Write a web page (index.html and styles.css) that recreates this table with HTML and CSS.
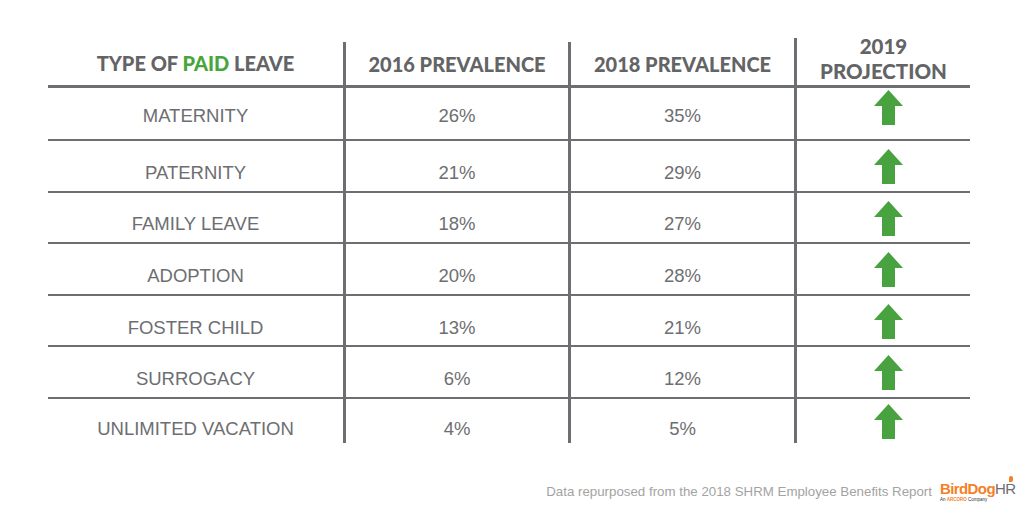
FILE: index.html
```html
<!DOCTYPE html>
<html>
<head>
<meta charset="utf-8">
<link rel="stylesheet" href="styles.css">
</head>
<body>
<div class="table">
  <div class="head">
    <div class="hc c1"><span>TYPE OF <em>PAID</em> LEAVE</span></div>
    <div class="hc c2"><span>2016 PREVALENCE</span></div>
    <div class="hc c3"><span>2018 PREVALENCE</span></div>
    <div class="hc c4"><span>2019<br>PROJECTION</span></div>
  </div>
  <div class="row first">
    <div class="cell c1">MATERNITY</div><div class="cell c2">26%</div><div class="cell c3">35%</div>
    <div class="cell c4"><svg class="arrow" width="29" height="35" viewBox="0 0 29 35"><polygon points="14.5,0 29,16 21,16 21,35 8,35 8,16 0,16"/></svg></div>
  </div>
  <div class="row">
    <div class="cell c1">PATERNITY</div><div class="cell c2">21%</div><div class="cell c3">29%</div>
    <div class="cell c4"><svg class="arrow" width="29" height="35" viewBox="0 0 29 35"><polygon points="14.5,0 29,16 21,16 21,35 8,35 8,16 0,16"/></svg></div>
  </div>
  <div class="row">
    <div class="cell c1">FAMILY LEAVE</div><div class="cell c2">18%</div><div class="cell c3">27%</div>
    <div class="cell c4"><svg class="arrow" width="29" height="35" viewBox="0 0 29 35"><polygon points="14.5,0 29,16 21,16 21,35 8,35 8,16 0,16"/></svg></div>
  </div>
  <div class="row">
    <div class="cell c1">ADOPTION</div><div class="cell c2">20%</div><div class="cell c3">28%</div>
    <div class="cell c4"><svg class="arrow" width="29" height="35" viewBox="0 0 29 35"><polygon points="14.5,0 29,16 21,16 21,35 8,35 8,16 0,16"/></svg></div>
  </div>
  <div class="row">
    <div class="cell c1">FOSTER CHILD</div><div class="cell c2">13%</div><div class="cell c3">21%</div>
    <div class="cell c4"><svg class="arrow" width="29" height="35" viewBox="0 0 29 35"><polygon points="14.5,0 29,16 21,16 21,35 8,35 8,16 0,16"/></svg></div>
  </div>
  <div class="row">
    <div class="cell c1">SURROGACY</div><div class="cell c2">6%</div><div class="cell c3">12%</div>
    <div class="cell c4"><svg class="arrow" width="29" height="35" viewBox="0 0 29 35"><polygon points="14.5,0 29,16 21,16 21,35 8,35 8,16 0,16"/></svg></div>
  </div>
  <div class="row last">
    <div class="cell c1">UNLIMITED VACATION</div><div class="cell c2">4%</div><div class="cell c3">5%</div>
    <div class="cell c4"><svg class="arrow" width="29" height="35" viewBox="0 0 29 35"><polygon points="14.5,0 29,16 21,16 21,35 8,35 8,16 0,16"/></svg></div>
  </div>
</div>
<div class="footer">
  <span class="source">Data repurposed from the 2018 SHRM Employee Benefits Report</span>
  <div class="logo">
    <div class="brand"><span class="bd">BirdDog</span><span class="hr">HR</span><span class="dot"></span></div>
    <div class="tag">An <b>ARCORO</b> Company</div>
  </div>
</div>
</body>
</html>
```
FILE: styles.css
```css
html, body {
  margin: 0;
  padding: 0;
  background: #ffffff;
}
body {
  width: 1024px;
  height: 512px;
  overflow: hidden;
  font-family: "Liberation Sans", Arial, sans-serif;
  color: #6d6e71;
}
.table {
  margin: 38px 0 0 48px;
  width: 922px;
}
.head, .row {
  display: grid;
  grid-template-columns: 295px 225px 226px 176px;
}
.head {
  height: 50px;
  border-bottom: 3px solid #6d6e71;
  box-sizing: border-box;
}
.hc {
  display: flex;
  align-items: center;
  justify-content: center;
  font-family: Lato, "Open Sans", sans-serif;
  font-weight: 900;
  font-size: 20px;
  color: #636466;
  text-align: center;
  padding-top: 2px;
}
.hc em {
  font-style: normal;
  color: #45a63b;
}
.hc.c2, .hc.c3 {
  margin-top: 4px;
  padding-top: 0;
  border-left: 3px solid #6d6e71;
}
.hc.c4 {
  border-left: 3px solid #6d6e71;
  line-height: 25px;
  font-size: 20.5px;
  padding-top: 0;
  align-items: flex-start;
}
.hc.c4 span {
  margin-top: -4px;
}
.row {
  height: 51.6px;
  box-sizing: border-box;
  border-bottom: 2px solid #6d6e71;
}
.row.first {
  height: 53px;
}
.row.last {
  height: 44px;
  border-bottom: none;
}
.cell {
  display: flex;
  align-items: center;
  justify-content: center;
  font-size: 18.5px;
  padding-top: 14px;
  box-sizing: border-box;
}
.row.first .cell {
  padding-top: 5px;
}
.row.last .cell {
  padding-top: 16px;
}
.cell.c2, .cell.c3, .cell.c4 {
  border-left: 3px solid #6d6e71;
}
.row .cell.c4 {
  align-items: flex-start;
  padding-top: 8px;
  padding-left: 10px;
}
.row.first .cell.c4 {
  padding-top: 2px;
}
.row.last .cell.c4 {
  padding-top: 5px;
}
.arrow polygon {
  fill: #48a23f;
}
.footer {
  display: flex;
  justify-content: flex-end;
  align-items: center;
  margin-top: 38px;
  padding-right: 12px;
}
.source {
  font-size: 13.3px;
  color: #a3a3a3;
  margin-right: 8px;
}
.logo {
  display: flex;
  flex-direction: column;
  width: 72px;
}
.brand {
  position: relative;
  font-family: "Liberation Sans", Arial, sans-serif;
  font-weight: 700;
  font-size: 15px;
  letter-spacing: -0.6px;
  line-height: 15px;
}
.bd { color: #f58025; }
.hr { color: #6d6e71; font-weight: 400; }
.dot {
  position: absolute;
  left: 69px;
  top: -5px;
  width: 4px;
  height: 6px;
  border-radius: 3px 3px 3px 0;
  background: #f58025;
}
.tag {
  font-size: 4.5px;
  color: #333;
  line-height: 5px;
  margin-top: 1px;
}
.tag b { color: #f58025; }
```
